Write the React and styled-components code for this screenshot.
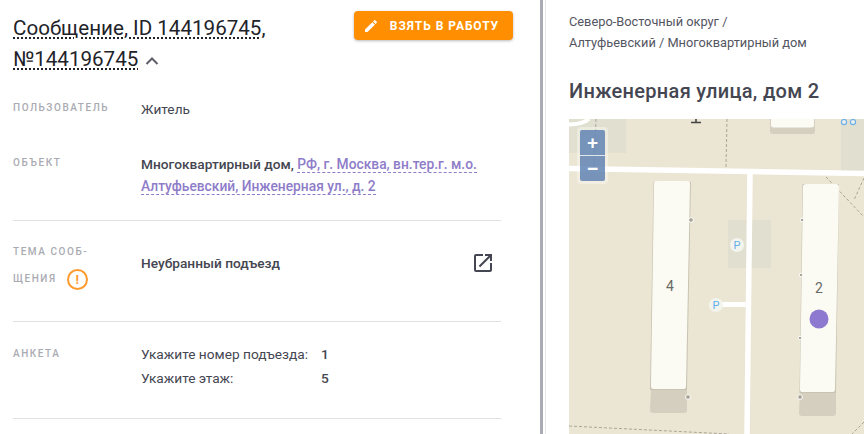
import React from 'react';
import styled, { createGlobalStyle } from 'styled-components';

const GlobalStyle = createGlobalStyle`
	html, body {
		margin: 0;
		padding: 0;
		background: #fff;
	}
	body {
		font-family: Roboto, "Noto Sans", sans-serif;
		color: #444651;
	}
`;

const Page = styled.div`
	width: 864px;
	height: 434px;
	display: flex;
	overflow: hidden;
`;

const LeftPanel = styled.section`
	width: 540px;
	box-sizing: border-box;
	padding: 11px 39px 0 13px;
	flex-shrink: 0;
`;

const Divider = styled.div`
	width: 3px;
	margin-right: 2px;
	flex-shrink: 0;
	background: #aaabb2;
`;

const RightPanel = styled.section`
	flex: 1;
	min-width: 0;
	padding: 11px 0 0 23px;
	border-left: 1px solid #e6e6e8;
	display: flex;
	flex-direction: column;
`;

const Header = styled.header`
	display: flex;
	justify-content: space-between;
	align-items: flex-start;
	margin-right: -12px;
`;

const Title = styled.h1`
	margin: 2px 0 0;
	width: 300px;
	font-size: 20.6px;
	line-height: 31px;
	font-weight: 400;
	color: #22232a;
	span {
		text-decoration: underline dotted 2px #22232a;
		text-underline-offset: 2px;
	}
	svg {
		vertical-align: -3px;
		margin-left: 1px;
	}
`;

const TakeButton = styled.button`
	width: 159px;
	height: 29px;
	display: flex;
	align-items: center;
	justify-content: center;
	gap: 11px;
	border: 0;
	border-radius: 4px;
	padding: 0 5px 0 0;
	background: #ff8f00;
	color: #fff;
	font: 700 12px Roboto, sans-serif;
	letter-spacing: 0.95px;
	box-shadow: 0 1px 3px rgba(0, 0, 0, 0.28);
`;

const Row = styled.div`
	display: flex;
	align-items: flex-start;
	padding: ${(p) => p.$pad || '0'};
	border-bottom: ${(p) => (p.$line ? '1px solid #e1e1e1' : '0')};
`;

const Label = styled.div`
	width: 128px;
	flex-shrink: 0;
	font-size: 10px;
	font-weight: 500;
	line-height: 27px;
	letter-spacing: 1.55px;
	color: #aaabb2;
	text-transform: uppercase;
`;

const Value = styled.div`
	flex: 1;
	font-size: 13.7px;
	line-height: 22px;
	margin-top: ${(p) => p.$top || '0'};
	font-weight: ${(p) => (p.$bold ? 500 : 400)};
	color: #444651;
`;

const AddressLink = styled.a`
	font-size: 13.8px;
	color: #8e7cc9;
	border-bottom: 1px dashed #8e7cc9;
`;

const AlertMark = styled.span`
	display: inline-flex;
	align-items: center;
	justify-content: center;
	width: 21px;
	height: 21px;
	box-sizing: border-box;
	margin-left: 6px;
	border: 2px solid #ff9a2e;
	border-radius: 50%;
	color: #ff9a2e;
	font-size: 13px;
	font-weight: 700;
	letter-spacing: 0;
	vertical-align: middle;
`;

const OpenIcon = styled.svg`
	flex-shrink: 0;
	margin: 13px 6px 0 0;
`;

const Survey = styled.dl`
	margin: 2px 0 0;
	display: grid;
	grid-template-columns: 180px 1fr;
	font-size: 13.7px;
	line-height: 24px;
	dt {
		font-weight: 400;
	}
	dd {
		margin: 0;
		font-weight: 500;
	}
`;

const Crumbs = styled.nav`
	font-size: 12.8px;
	line-height: 21px;
	color: #53555f;
`;

const Address = styled.h2`
	margin: 24px 0 0;
	font-size: 20px;
	line-height: 29px;
	font-weight: 500;
	letter-spacing: 0.3px;
	color: #444651;
`;

const MapBox = styled.div`
	position: relative;
	flex: 1;
	margin-top: 13px;
	overflow: hidden;
	background: #ebe6d3;
	svg {
		display: block;
	}
`;

const ZoomGroup = styled.div`
	position: absolute;
	left: 8px;
	top: 8px;
	width: 25px;
	padding: 3px;
	border-radius: 4px;
	background: rgba(255, 255, 255, 0.35);
`;

const ZoomButton = styled.div`
	height: 25px;
	display: flex;
	align-items: center;
	justify-content: center;
	background: rgba(92, 127, 177, 0.82);
	color: #fff;
	font: 700 19px/1 "Liberation Sans", sans-serif;
	border-radius: ${(p) => (p.$bottom ? '0 0 2px 2px' : '2px 2px 0 0')};
	border-top: ${(p) => (p.$bottom ? '1px solid #dfe5ea' : '0')};
`;

const PencilIcon = () => (
	<svg width="16" height="16" viewBox="0 0 24 24" fill="#fff">
		<path d="M3 17.25V21h3.75L17.81 9.94l-3.75-3.75L3 17.25zM20.71 7.04a1 1 0 0 0 0-1.41l-2.34-2.34a1 1 0 0 0-1.41 0l-1.83 1.83 3.75 3.75 1.83-1.83z" />
	</svg>
);

const ChevronUp = () => (
	<svg width="16" height="16" viewBox="0 0 16 16" fill="none" stroke="#5e5f68" strokeWidth="2">
		<path d="M2.5 11 8 5.5 13.5 11" />
	</svg>
);

const CityMap = () => (
	<svg width="295" height="315" viewBox="0 0 295 315">
		{/* blocks and service areas */}
		<rect x="0" y="0" width="57" height="34" fill="#e1e0d0" />
		<rect x="272" y="0" width="23" height="52" fill="#e1e0d0" />
		<rect x="159" y="101" width="43" height="48" fill="#e1e0d0" />
		{/* corner road */}
		<path d="M0 5.5 C9 5.5 15 4 20 0" fill="none" stroke="#fff" strokeWidth="4" />
		{/* roads */}
		<path d="M0 49.5 L295 54.5" stroke="#fff" strokeWidth="5.5" />
		<path d="M181 54 L178 315" stroke="#fff" strokeWidth="5.5" />
		<path d="M147 185.5 L180 185.5" stroke="#fff" strokeWidth="5" />
		{/* dashed paths */}
		<g fill="none" stroke="#a9a697" strokeWidth="1" strokeDasharray="3 2">
			<path d="M27 0 L25 48" />
			<path d="M158 0 L157 48" />
			<path d="M0 307 L160 315" />
			<path d="M257 58 L295 98" />
			<path d="M295 59 L285 81" />
			<path d="M295 303 L283 315" />
		</g>
		{/* building 4 */}
		<path d="M82 268 L118 268 L118 291 Q118 294 115 294 L84 294 Q81 294 81 291 Z" fill="#d5cfc0" />
		<path d="M84.5 63 L122 63 L118 271 L81 271 Z" fill="#c9c4b2" />
		<path d="M85 65 Q85 62 88 62 L118 62 Q121 62 121 65 L117 267 Q117 270 115 270 L84 270 Q82 270 82 267 Z" fill="#fbfbf4" />
		{/* building 2 */}
		<path d="M231 270 L267 270 L267 294 Q267 297 264 297 L233 297 Q230 297 230 294 Z" fill="#d5cfc0" />
		<path d="M233.5 65 L270 65 L267 274 L230.5 274 Z" fill="#c9c4b2" />
		<path d="M234 68 Q234 65 237 65 L267 65 Q270 65 270 68 L266 270 Q266 273 264 273 L233 273 Q231 273 231 270 Z" fill="#fbfbf4" />
		{/* top building */}
		<path d="M201 0 L246 0 L246 12 Q246 15 243 15 L204 15 Q201 15 201 12 Z" fill="#d5cfc0" />
		<path d="M202 0 L245 0 L245 6 Q245 8.5 242 8.5 L205 8.5 Q202 8.5 202 6 Z" fill="#fbfbf4" />
		{/* entrances */}
		<g fill="#a8a595" stroke="#fff" strokeWidth="1">
			<circle cx="122" cy="101" r="2.4" />
			<circle cx="119" cy="278" r="2.4" />
			<circle cx="233" cy="101" r="1.8" />
			<circle cx="232" cy="156" r="1.8" />
			<circle cx="231" cy="219" r="1.8" />
			<circle cx="231" cy="278" r="2.4" />
		</g>
		{/* mark on top edge */}
		<path d="M127 0 V3 M122 3.5 H132" stroke="#444" strokeWidth="1.6" />
		{/* top right icons */}
		<g fill="#e9eff0" stroke="#6fb0e8" strokeWidth="1.2">
			<circle cx="275" cy="3" r="2.6" />
			<circle cx="284" cy="3" r="2.6" />
		</g>
		{/* parking */}
		<circle cx="168" cy="126" r="7" fill="#f4f4ee" />
		<circle cx="147" cy="186" r="7" fill="#f4f4ee" />
		<g fontFamily="Roboto, sans-serif" fontSize="11" fill="#64aee8" textAnchor="middle">
			<text x="168" y="130">P</text>
			<text x="147" y="190">P</text>
		</g>
		{/* house numbers */}
		<g fontFamily="Roboto, sans-serif" fontSize="14" fill="#6a6a66" textAnchor="middle">
			<text x="101" y="172">4</text>
			<text x="250" y="174">2</text>
		</g>
		<circle cx="250" cy="200" r="9.5" fill="#8d79cf" />
	</svg>
);

const App = () => (
	<Page>
		<GlobalStyle />
		<LeftPanel>
			<Header>
				<Title>
					<span>Сообщение, ID 144196745</span>, <span>№144196745</span> <ChevronUp />
				</Title>
				<TakeButton>
					<PencilIcon />
					ВЗЯТЬ В РАБОТУ
				</TakeButton>
			</Header>
			<Row $pad="19px 0 0">
				<Label>Пользователь</Label>
				<Value $top="4px">Житель</Value>
			</Row>
			<Row $pad="28px 0 23px" $line>
				<Label>Объект</Label>
				<Value $top="4px" $bold>
					Многоквартирный дом, <AddressLink>РФ, г. Москва, вн.тер.г. м.о. Алтуфьевский, Инженерная ул., д. 2</AddressLink>
				</Value>
			</Row>
			<Row $pad="17px 0 29px" $line>
				<Label>
					Тема сооб-
					<br />
					щения <AlertMark>!</AlertMark>
				</Label>
				<Value $top="14px" $bold>Неубранный подъезд</Value>
				<OpenIcon width="24" height="24" viewBox="0 0 24 24" fill="#444651">
					<path d="M19 19H5V5h7V3H5a2 2 0 0 0-2 2v14a2 2 0 0 0 2 2h14c1.1 0 2-.9 2-2v-7h-2v7zM14 3v2h3.59l-9.83 9.83 1.41 1.41L19 6.41V10h2V3h-7z" />
				</OpenIcon>
			</Row>
			<Row $pad="18px 0 28px" $line>
				<Label>Анкета</Label>
				<Survey>
					<dt>Укажите номер подъезда:</dt>
					<dd>1</dd>
					<dt>Укажите этаж:</dt>
					<dd>5</dd>
				</Survey>
			</Row>
		</LeftPanel>
		<Divider />
		<RightPanel>
			<Crumbs>
				Северо-Восточный округ /
				<br />
				Алтуфьевский / Многоквартирный дом
			</Crumbs>
			<Address>Инженерная улица, дом 2</Address>
			<MapBox>
				<CityMap />
				<ZoomGroup>
					<ZoomButton>+</ZoomButton>
					<ZoomButton $bottom>−</ZoomButton>
				</ZoomGroup>
			</MapBox>
		</RightPanel>
	</Page>
);

export default App;
